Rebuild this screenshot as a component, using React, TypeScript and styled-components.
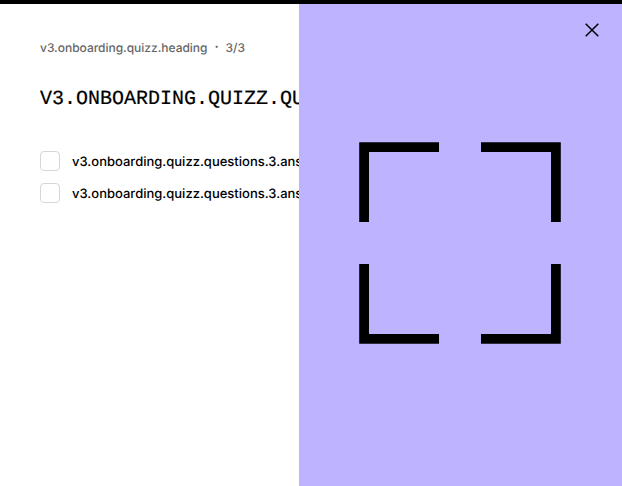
import React from "react";
import styled, { createGlobalStyle } from "styled-components";

const GlobalStyle = createGlobalStyle`
  * { box-sizing: border-box; }
  body { margin: 0; overflow: hidden; background: #fff; }
`;

const Modal = styled.main`
  display: grid;
  grid-template-columns: 299px 323px;
  width: 622px;
  height: 486px;
  border-top: 4px solid #000;
  color: #000;
  font-family: Inter, sans-serif;
  text-rendering: geometricPrecision;
  -webkit-font-smoothing: antialiased;
`;

const Content = styled.section`
  min-width: 0;
  overflow: hidden;
  padding: 34px 0 0 40px;
  white-space: nowrap;
`;

const Progress = styled.div`
  display: flex;
  height: 20px;
  color: #666;
  font-size: 12px;
  font-weight: 500;
  line-height: 20px;
  letter-spacing: -0.02px;
`;

const Separator = styled.span`
  width: 18px;
  font-weight: 800;
  line-height: 18px;
  text-align: center;
`;

const Question = styled.h1`
  margin: 28px 0 0;
  font-family: "Liberation Mono", monospace;
  font-size: 20px;
  font-weight: 400;
  line-height: 28px;
  text-transform: uppercase;
  -webkit-text-stroke: 0.2px #000;
`;

const Answers = styled.div`
  display: grid;
  gap: 12px;
  margin-top: 37px;
`;

const Answer = styled.label`
  display: flex;
  align-items: center;
  gap: 12px;
  height: 20px;
  font-size: 13px;
  font-weight: 500;
  line-height: 22px;
`;

const Checkbox = styled.input`
  appearance: none;
  flex: none;
  width: 20px;
  height: 20px;
  margin: 0;
  border: 1px solid #d6d6d6;
  border-radius: 4px;
  background: #fff;
`;

const AnswerText = styled.span`
  padding-top: 1px;
`;

const Visual = styled.aside`
  display: flex;
  flex-direction: column;
  background: #beb3ff;
`;

const CloseButton = styled.button`
  display: flex;
  align-self: flex-end;
  margin: 16px 20px 0 0;
  padding: 0;
  border: 0;
  background: none;
  color: #000;
`;

const Frame = styled.svg`
  display: block;
  margin: 102px 0 0 60px;
`;

const answers = [1, 2];

export default function App() {
  return (
    <>
      <GlobalStyle />
      <Modal>
        <Content>
          <Progress>
            <span>v3.onboarding.quizz.heading</span>
            <Separator>·</Separator>
            <span>3/3</span>
          </Progress>
          <Question>v3.onboarding.quizz.questions.3.title</Question>
          <Answers>
            {answers.map((n) => (
              <Answer key={n}>
                <Checkbox type="checkbox" />
                <AnswerText>{`v3.onboarding.quizz.questions.3.answers.${n}`}</AnswerText>
              </Answer>
            ))}
          </Answers>
        </Content>
        <Visual>
          <CloseButton aria-label="Close">
            <svg width="20" height="20" viewBox="0 0 20 20" fill="none" stroke="currentColor" strokeWidth="1.5">
              <path d="M3.7 3.7l12.6 12.6M16.3 3.7L3.7 16.3" />
            </svg>
          </CloseButton>
          <Frame width="202" height="202" viewBox="0 0 202 202">
            <path d="M.2.2H80V10H10v70H.2zM122 .2h79.8V80H192V10h-70zM.2 122H10v70h70v9.8H.2zM192 122h9.8v79.8H122V192h70z" />
          </Frame>
        </Visual>
      </Modal>
    </>
  );
}
